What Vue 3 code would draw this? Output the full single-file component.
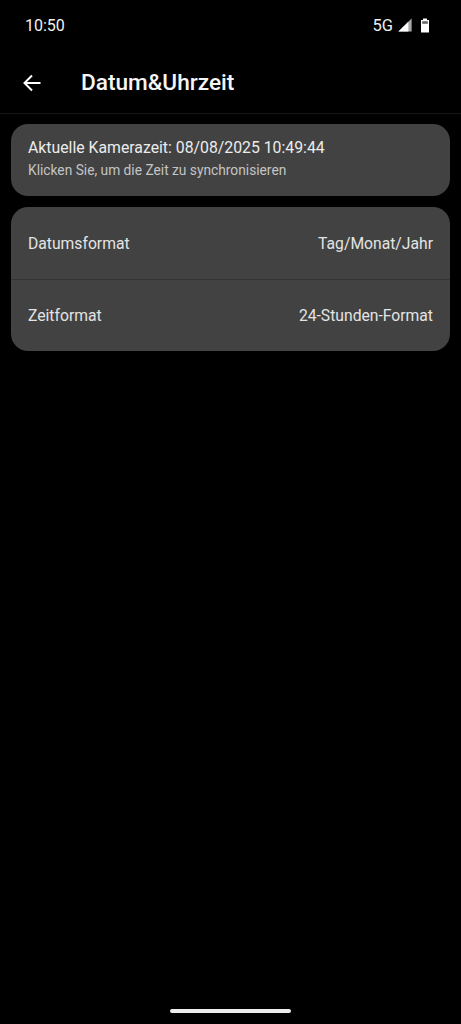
<script setup>
const rows = [
  { label: 'Datumsformat', value: 'Tag/Monat/Jahr' },
  { label: 'Zeitformat', value: '24-Stunden-Format' }
]
</script>

<template>
  <div class="page">
    <div class="status">
      <span class="clock">10:50</span>
      <div class="status-right">
        <span class="net">5G</span>
        <svg class="signal" width="14" height="14" viewBox="0 0 14 14"><path d="M13.6 0.4V13.6H0.4Z" fill="#a8a8a8"/><path d="M10.4 3.8V13.6H0.4Z" fill="#fff"/></svg>
        <svg class="battery" width="10" height="15" viewBox="0 0 10 15"><path d="M3 0.5H7V2H9V14.5H1V2H3Z" fill="#fff"/><rect x="2.2" y="3.2" width="5.6" height="2.6" fill="#666"/></svg>
      </div>
    </div>
    <header class="bar">
      <svg class="back" width="20" height="20" viewBox="0 0 20 20"><path d="M18.5 10H2.5M10 2.5L2.5 10L10 17.5" fill="none" stroke="#fff" stroke-width="2"/></svg>
      <h1 class="title">Datum&amp;Uhrzeit</h1>
    </header>
    <main class="content">
      <section class="card sync">
        <div class="sync-main">Aktuelle Kamerazeit: 08/08/2025 10:49:44</div>
        <div class="sync-sub">Klicken Sie, um die Zeit zu synchronisieren</div>
      </section>
      <section class="card">
        <div v-for="row in rows" :key="row.label" class="row">
          <span>{{ row.label }}</span>
          <span>{{ row.value }}</span>
        </div>
      </section>
    </main>
    <div class="home"></div>
  </div>
</template>

<style>
html, body { margin: 0; background: #000; }
</style>

<style scoped>
.page {
  width: 461px;
  height: 1024px;
  background: #000;
  display: flex;
  flex-direction: column;
  font-family: Roboto, "Liberation Sans", sans-serif;
  color: #fff;
  overflow: hidden;
}
.status {
  height: 50px;
  box-sizing: border-box;
  padding: 0 31px 0 25px;
  display: flex;
  align-items: center;
  justify-content: space-between;
  flex-shrink: 0;
}
.clock { font-size: 16px; color: #f2f2f2; }
.status-right { display: flex; align-items: center; gap: 5px; }
.signal { margin-right: 3px; }
.net { font-size: 16.5px; color: #eee; }
.bar {
  height: 64px;
  box-sizing: border-box;
  border-bottom: 1px solid #141414;
  padding: 2px 22px 0;
  display: flex;
  align-items: center;
  gap: 39px;
  flex-shrink: 0;
}
.title { margin: 0; font-size: 22.65px; font-weight: 500; color: #f5f5f5; }
.content {
  padding: 10px 11px 0;
  display: flex;
  flex-direction: column;
  gap: 11px;
}
.card { background: #424242; border-radius: 17px; overflow: hidden; }
.sync {
  height: 72px;
  box-sizing: border-box;
  padding: 0 17px 5px;
  display: flex;
  flex-direction: column;
  justify-content: center;
  gap: 5px;
}
.sync-main { font-size: 15.8px; color: #ececec; }
.sync-sub { font-size: 13.75px; color: #c4c4c4; }
.row {
  height: 72px;
  box-sizing: border-box;
  padding: 0 17px;
  display: flex;
  align-items: center;
  justify-content: space-between;
  font-size: 15.7px;
  color: #e4e4e4;
}
.row + .row { border-top: 1px solid #353535; }
.home {
  position: absolute;
  left: 170px;
  top: 1009px;
  width: 121px;
  height: 4px;
  border-radius: 2px;
  background: #ececec;
}
</style>
